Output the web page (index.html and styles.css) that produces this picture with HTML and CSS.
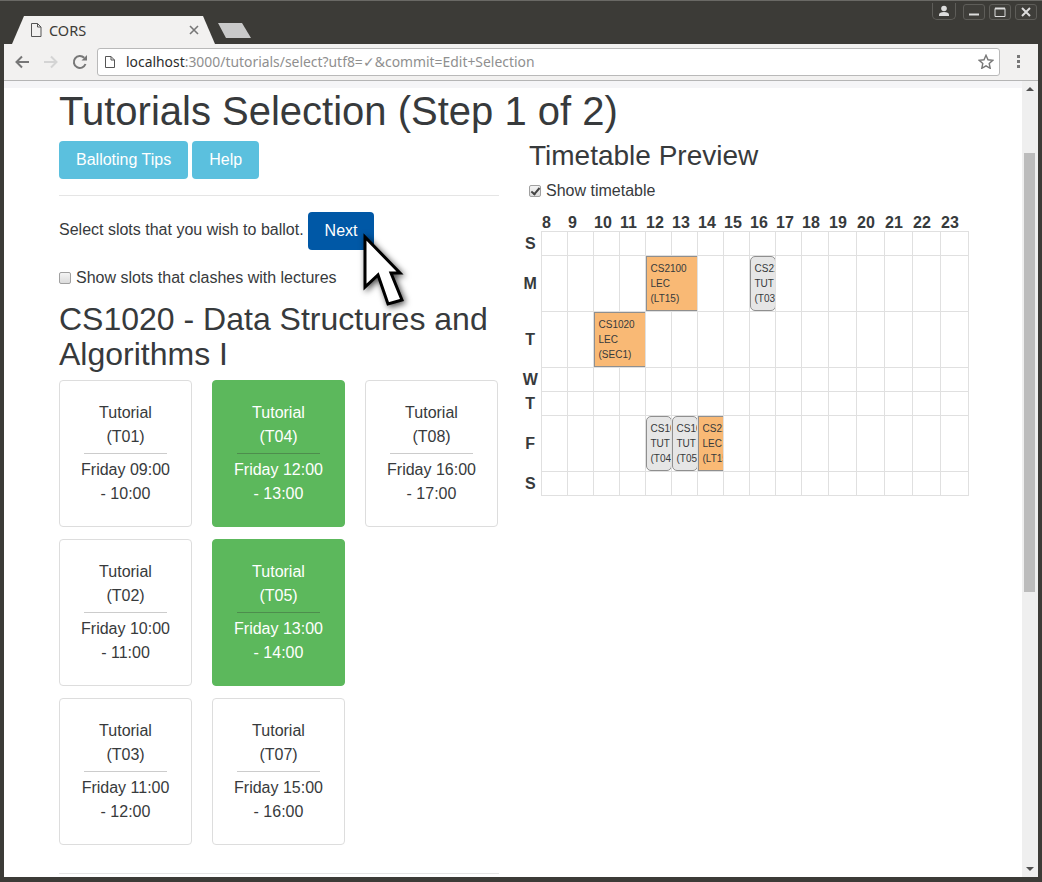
FILE: index.html
```html
<!DOCTYPE html>
<html lang="en">
<head>
    <meta charset="UTF-8">
    <title>CORS</title>
    <link rel="stylesheet" href="styles.css">
</head>
<body>

<div class="window">
    <div class="titlebar">
        <div class="tab">
            <svg class="tab-icon" width="12" height="14" viewBox="0 0 12 14"><path d="M1.5 .5h6l3.500 3.500v9.500h-9.500z M7.500 .5v3.500h3.500" fill="none" stroke="#555" stroke-width="1"/></svg>
            <span class="tab-title">CORS</span>
            <svg class="tab-close" width="10" height="10" viewBox="0 0 10 10"><path d="M1 1l8 8M9 1l-8 8" stroke="#777" stroke-width="1.600"/></svg>
        </div>
        <div class="new-tab"></div>
        <div class="window-buttons">
            <div class="win-btn profile">
                <svg width="12" height="12" viewBox="0 0 12 12"><circle cx="6" cy="3.500" r="2.800" fill="#ddd"/><path d="M1 11v-1.500c0-1.500 2-2.500 5-2.500s5 1 5 2.500v1.500z" fill="#ddd"/></svg>
            </div>
            <div class="win-btn">
                <svg width="12" height="12" viewBox="0 0 12 12"><path d="M1 8.500h10" stroke="#ddd" stroke-width="2"/></svg>
            </div>
            <div class="win-btn">
                <svg width="12" height="12" viewBox="0 0 12 12"><path d="M1 2.500h10v8h-10z" fill="none" stroke="#ddd" stroke-width="1"/><path d="M1 2.500h10" stroke="#ddd" stroke-width="2"/></svg>
            </div>
            <div class="win-btn">
                <svg width="12" height="12" viewBox="0 0 12 12"><path d="M2 2l8 8M10 2l-8 8" stroke="#ddd" stroke-width="2"/></svg>
            </div>
        </div>
    </div>

    <div class="toolbar">
        <svg class="nav-icon" width="16" height="16" viewBox="0 0 16 16"><path d="M15 8h-12M8 2.500l-5.500 5.500l5.500 5.500" fill="none" stroke="#777" stroke-width="2"/></svg>
        <svg class="nav-icon" width="16" height="16" viewBox="0 0 16 16"><path d="M1 8h12M8 2.500l5.500 5.500l-5.500 5.500" fill="none" stroke="#d4d4d4" stroke-width="2"/></svg>
        <svg class="nav-icon" width="16" height="16" viewBox="0 0 16 16"><path d="M13.500 10a6 6 0 1 1 -1.300 -6.200" fill="none" stroke="#777" stroke-width="2"/><path d="M9.500 6.500h5.500v-5.500z" fill="#777"/></svg>
        <div class="omnibox">
            <svg class="omni-icon" width="10" height="12" viewBox="0 0 10 12"><path d="M.5 .5h5.500l3.500 3.500v7.500h-9z M6 .5v3.500h3.500" fill="none" stroke="#555" stroke-width="1"/></svg>
            <span class="url"><span class="url-host">localhost</span>:3000/tutorials/select?utf8=✓&amp;commit=Edit+Selection</span>
            <svg class="star" width="16" height="15" viewBox="0 0 16 15"><path d="M8 1.300l2 4.500l4.800 .5l-3.600 3.200l1 4.800l-4.200 -2.500l-4.200 2.500l1 -4.800l-3.600 -3.200l4.800 -.5z" fill="none" stroke="#777" stroke-width="1.400"/></svg>
        </div>
        <div class="menu-dots"><i></i><i></i><i></i></div>
    </div>

    <div class="viewport">
        <div class="page">
            <div class="page-shade"></div>
            <div class="content">
                <h1>Tutorials Selection (Step 1 of 2)</h1>
                <div class="columns">
                    <div class="left">
                        <div class="tips">
                            <a class="btn btn-info">Balloting Tips</a>
                            <a class="btn btn-info">Help</a>
                        </div>
                        <hr class="rule">
                        <div class="intro">
                            <span class="intro-text">Select slots that you wish to ballot.</span>
                            <a class="btn btn-next">Next</a>
                        </div>
                        <label class="check clash"><input type="checkbox"> Show slots that clashes with lectures</label>
                        <h2>CS1020 - Data Structures and Algorithms I</h2>
                        <div class="slots">
                            <div class="slot-col">
                                <div class="card"><p>Tutorial<br>(T01)</p><hr><p>Friday 09:00<br>- 10:00</p></div>
                                <div class="card"><p>Tutorial<br>(T02)</p><hr><p>Friday 10:00<br>- 11:00</p></div>
                                <div class="card"><p>Tutorial<br>(T03)</p><hr><p>Friday 11:00<br>- 12:00</p></div>
                            </div>
                            <div class="slot-col">
                                <div class="card selected"><p>Tutorial<br>(T04)</p><hr><p>Friday 12:00<br>- 13:00</p></div>
                                <div class="card selected"><p>Tutorial<br>(T05)</p><hr><p>Friday 13:00<br>- 14:00</p></div>
                                <div class="card"><p>Tutorial<br>(T07)</p><hr><p>Friday 15:00<br>- 16:00</p></div>
                            </div>
                            <div class="slot-col">
                                <div class="card"><p>Tutorial<br>(T08)</p><hr><p>Friday 16:00<br>- 17:00</p></div>
                            </div>
                        </div>
                        <hr class="rule bottom-rule">
                    </div>

                    <div class="right">
                        <h3>Timetable Preview</h3>
                        <label class="check"><input type="checkbox" checked> Show timetable</label>
                        <table class="timetable">
                            <colgroup>
                                <col class="c-day">
                                <col class="c-h"><col class="c-h"><col class="c-h"><col class="c-h"><col class="c-h">
                                <col class="c-h"><col class="c-h"><col class="c-h"><col class="c-h"><col class="c-h">
                                <col class="c-m"><col class="c-w"><col class="c-w"><col class="c-w"><col class="c-w"><col class="c-w">
                            </colgroup>
                            <thead>
                                <tr>
                                    <th></th>
                                    <th>8</th><th>9</th><th>10</th><th>11</th><th>12</th><th>13</th><th>14</th><th>15</th>
                                    <th>16</th><th>17</th><th>18</th><th>19</th><th>20</th><th>21</th><th>22</th><th>23</th>
                                </tr>
                            </thead>
                            <tbody id="timetable-body"></tbody>
                        </table>
                    </div>
                </div>
            </div>
        </div>

        <div class="scrollbar">
            <div class="arrow arrow-up"></div>
            <div class="thumb"></div>
            <div class="arrow arrow-down"></div>
        </div>

        <svg class="cursor" width="60" height="90" viewBox="0 0 60 90">
            <path d="M10 6v50l13 -12l10 29l14 -4l-11 -27h9z" fill="#fff" stroke="#000" stroke-width="3"/>
        </svg>
    </div>
</div>

<script>
    // day label, tall row?, then events as [start hour, span, type, text lines]
    const hari = [
        ["S", false, []],
        ["M", true, [[12, 2, "lec", "CS2100", "LEC", "(LT15)"], [16, 1, "tut", "CS2100", "TUT", "(T03)"]]],
        ["T", true, [[10, 2, "lec", "CS1020", "LEC", "(SEC1)"]]],
        ["W", false, []],
        ["T", false, []],
        ["F", true, [[12, 1, "tut", "CS1020", "TUT", "(T04)"], [13, 1, "tut", "CS1020", "TUT", "(T05)"], [14, 1, "lec", "CS2100", "LEC", "(LT15)"]]],
        ["S", false, []]
    ];

    let isiTabel = '';
    for (const [nama, tinggi, acara] of hari) {
        isiTabel += `<tr class="${tinggi ? 'row-tall' : 'row-short'}"><th>${nama}</th>`;
        let jam = 8;
        while (jam < 24) {
            const a = acara.find(e => e[0] === jam);
            if (a) {
                isiTabel += `<td colspan="${a[1]}"><div class="event ${a[2]}">${a[3]}<br>${a[4]}<br>${a[5]}</div></td>`;
                jam += a[1];
            } else {
                isiTabel += '<td></td>';
                jam++;
            }
        }
        isiTabel += '</tr>';
    }
    document.getElementById("timetable-body").innerHTML = isiTabel;
</script>

</body>
</html>
```

FILE: styles.css
```css
html, body {
    margin: 0;
    height: 100%;
    overflow: hidden;
}
body {
    background: #3c3b37;
    font-family: "Liberation Sans", Arial, sans-serif;
    color: #373a3c;
}
.window {
    height: 877px;
    display: flex;
    flex-direction: column;
    padding: 0 4px 0 4px;
    box-shadow: inset 0 1px 0 #6a6965;
}

/* browser chrome */
.titlebar {
    height: 44px;
    flex: none;
    display: flex;
    align-items: flex-start;
    position: relative;
}
.tab {
    width: 203px;
    height: 28px;
    margin: 16px 0 0 8px;
    background: #f2f1f0;
    clip-path: polygon(0 100%, 12px 0, 191px 0, 203px 100%);
    display: flex;
    align-items: center;
    padding: 0 16px 0 18px;
    box-sizing: border-box;
}
.tab-icon {
    flex: none;
}
.tab-title {
    margin-left: 7px;
    flex: 1;
    font: 14.500px "Noto Sans", sans-serif;
    color: #3c3b37;
}
.new-tab {
    width: 33px;
    height: 15px;
    margin: 23px 0 0 3px;
    background: #c9c9c9;
    clip-path: polygon(0 0, 24px 0, 33px 100%, 8px 100%);
}
.window-buttons {
    margin-left: auto;
    display: flex;
    gap: 4px;
    padding: 4px 1px 0 0;
}
.win-btn {
    width: 22px;
    height: 16px;
    box-sizing: border-box;
    border: 1px solid #5e5d59;
    border-radius: 3px;
    display: flex;
    align-items: center;
    justify-content: center;
    background: #3f3e3a;
}
.win-btn.profile {
    width: 24px;
    margin-right: 3px;
    margin-top: -1px;
    height: 17px;
    border-top: 0;
    border-radius: 0 0 5px 5px;
    background: none;
}
.toolbar {
    height: 37px;
    flex: none;
    background: #f2f1f0;
    border-bottom: 1px solid #b5b5b5;
    box-sizing: border-box;
    display: flex;
    align-items: center;
    padding-bottom: 1px;
}
.nav-icon {
    flex: none;
    margin-left: 13px;
}
.nav-icon:first-child {
    margin-left: 10px;
}
.omnibox {
    width: 903px;
    height: 28px;
    box-sizing: border-box;
    margin-left: 9px;
    background: #fff;
    border: 1px solid #b9b9b9;
    border-radius: 3px;
    display: flex;
    align-items: center;
    padding: 0 5px 0 7px;
}
.omni-icon {
    flex: none;
}
.url {
    margin-left: 11px;
    flex: 1;
    font: 13.900px "Noto Sans", sans-serif;
    color: #8f8f8f;
    white-space: nowrap;
}
.url-host {
    color: #2c2c2c;
}
.menu-dots {
    margin-left: 17px;
    display: flex;
    flex-direction: column;
    gap: 2px;
}
.menu-dots i {
    width: 3px;
    height: 3px;
    background: #777;
}

/* page */
.viewport {
    flex: 1;
    min-height: 0;
    display: flex;
    position: relative;
}
.page {
    flex: 1;
    background: #fff;
    overflow: hidden;
}
.page-shade {
    height: 7px;
    background: #f5f5f7;
}
.content {
    padding: 0 0 0 55px;
    font-size: 16px;
    line-height: 24px;
}
h1 {
    font-size: 40px;
    font-weight: 400;
    line-height: 44px;
    margin: 0;
    padding-top: 1px;
}
h2 {
    font-size: 32px;
    font-weight: 400;
    line-height: 35px;
    margin: 0 0 8px;
}
h3 {
    font-size: 28px;
    font-weight: 400;
    line-height: 31px;
    margin: -1px 0 8px;
}
.columns {
    display: grid;
    grid-template-columns: 440px 440px;
    gap: 30px;
    margin-top: 8px;
}
.btn {
    display: inline-block;
    height: 38px;
    box-sizing: border-box;
    line-height: 36px;
    padding: 0 16px;
    border-radius: 4px;
    color: #fff;
    border: 1px solid transparent;
}
.btn-info {
    background: #5bc0de;
}
.btn-next {
    background: #0058a6;
}
.tips {
    display: flex;
    gap: 4px;
}
.rule {
    border: 0;
    border-top: 1px solid #e5e5e5;
    margin: 16px 0;
}
.intro {
    display: flex;
    align-items: center;
    gap: 4px;
}
.intro-text {
    padding-bottom: 2px;
}
.check {
    display: flex;
    align-items: center;
    gap: 5px;
}
.check input {
    appearance: none;
    margin: 0;
    width: 12px;
    height: 12px;
    box-sizing: border-box;
    border: 1px solid #a0a0a0;
    border-radius: 2px;
    background: linear-gradient(#f4f4f4, #dcdcdc);
    position: relative;
}
.check input:checked::after {
    content: "";
    position: absolute;
    left: 3px;
    top: 0;
    width: 3px;
    height: 7px;
    border: solid #444;
    border-width: 0 2px 2px 0;
    transform: rotate(40deg);
}
.clash {
    margin: 16px 0 12px;
}
.slots {
    display: flex;
    gap: 20px;
}
.slot-col {
    display: flex;
    flex-direction: column;
    gap: 12px;
}
.card {
    width: 133px;
    height: 147px;
    box-sizing: border-box;
    border: 1px solid #ddd;
    border-radius: 4px;
    padding: 20px 0 0;
    text-align: center;
    background: #fff;
}
.card p {
    margin: 0;
}
.card hr {
    border: 0;
    border-top: 1px solid #ccc;
    margin: 4px 24px;
}
.card.selected {
    background: #5cb85c;
    border-color: #5cb85c;
    color: #fff;
}
.card.selected hr {
    border-top-color: #4d8d4d;
}
.bottom-rule {
    margin: 28px 0 0;
}

/* timetable */
.timetable {
    border-collapse: collapse;
    table-layout: fixed;
    width: 446px;
    margin: 12px 0 0 -7px;
}
.c-day {
    width: 19px;
}
.c-h {
    width: 26px;
}
.c-m {
    width: 27px;
}
.c-w {
    width: 28px;
}
.timetable thead th {
    text-align: left;
    padding: 0 0 0 1px;
    line-height: 16px;
    height: 16px;
}
.timetable tbody th {
    text-align: center;
    padding: 0 2px 0 0;
}
.timetable td {
    border: 1px solid #e0e0e0;
    padding: 0;
}
.row-short {
    height: 24px;
}
.row-tall {
    height: 56px;
}
.event {
    width: calc(100% + 1px);
    height: 55px;
    box-sizing: border-box;
    overflow: hidden;
    border: 1px solid #8f8f8f;
    padding: 4px 0 0 4px;
    font-size: 10px;
    line-height: 15px;
    white-space: nowrap;
}
.lec {
    background: #f9b975;
}
.tut {
    background: #e6e6e6;
    border-radius: 5px;
}

/* scrollbar */
.scrollbar {
    width: 16px;
    flex: none;
    background: #efefef;
    position: relative;
}
.thumb {
    position: absolute;
    left: 2px;
    top: 72px;
    width: 11px;
    height: 439px;
    background: #bcbcbc;
}
.arrow {
    position: absolute;
    left: 4px;
    width: 0;
    height: 0;
    border-left: 4px solid transparent;
    border-right: 4px solid transparent;
}
.arrow-up {
    top: 6px;
    border-bottom: 4px solid #505050;
}
.arrow-down {
    bottom: 6px;
    border-top: 4px solid #505050;
}
.cursor {
    position: absolute;
    left: 351px;
    top: 150px;
    filter: drop-shadow(2px 2px 3px rgba(0, 0, 0, .7));
}
```
